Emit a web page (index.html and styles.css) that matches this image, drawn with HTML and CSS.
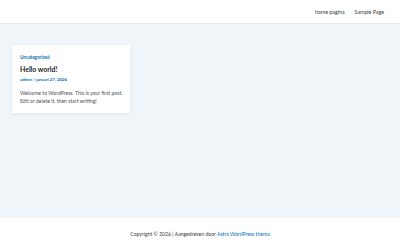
FILE: index.html
```html
<!DOCTYPE html>
<html lang="nl">
<head>
  <meta charset="UTF-8">
  <meta name="viewport" content="width=device-width, initial-scale=1.0">
  <title>Hello world!</title>
  <link rel="stylesheet" href="styles.css">
</head>
<body>
  <header class="site-header">
    <nav class="main-nav">
      <a href="#">home pagina</a>
      <a href="#">Sample Page</a>
    </nav>
  </header>

  <main class="site-content">
    <article class="post-card">
      <a class="post-cat" href="#">Uncategorized</a>
      <h2 class="post-title">Hello world!</h2>
      <div class="post-meta"><a href="#">admin</a> / <a href="#">januari 27, 2026</a></div>
      <p class="post-excerpt">Welcome to WordPress. This is your first post. Edit or delete it, then start writing!</p>
    </article>
  </main>

  <footer class="site-footer">
    <p>Copyright &copy; 2026 | Aangedreven door <a href="#">Astra WordPress thema</a></p>
  </footer>
</body>
</html>
```

FILE: styles.css
```css
body {
    font-family: Lato, "Noto Sans", sans-serif;
    background-color: #ffffff;
    color: #4b4f58;
    margin: 0;
    padding: 0;
    display: flex;
    flex-direction: column;
    height: 250px;
    overflow: hidden;
}

a {
    text-decoration: none;
    color: #0170b9;
}

.site-header {
    height: 23px;
    background-color: #ffffff;
    border-bottom: 1px solid #e6e9ee;
    display: flex;
    align-items: center;
    justify-content: flex-end;
    padding-right: 16px;
}

.main-nav {
    display: flex;
    gap: 10px;
}

.main-nav a {
    color: #3a3a3a;
    font-size: 5.3px;
}

.site-content {
    flex: 1;
    background-color: #f0f5fa;
    padding: 21px 12px 0;
}

.post-card {
    width: 118px;
    box-sizing: border-box;
    background-color: #ffffff;
    padding: 9px 4px 8px 8px;
    box-shadow: 0 1px 4px rgba(0, 0, 0, 0.06);
}

.post-cat {
    display: block;
    font-size: 4.6px;
    font-weight: 700;
    line-height: 6px;
}

.post-title {
    font-size: 6.9px;
    color: #222222;
    font-weight: 700;
    margin: 4px 0 3px;
    line-height: 10px;
}

.post-meta {
    font-size: 4.3px;
    font-weight: 700;
    color: #0170b9;
    line-height: 6px;
}

.post-excerpt {
    font-size: 5.1px;
    line-height: 8px;
    margin: 6px 0 0;
    color: #4b4f58;
}

.site-footer {
    height: 32px;
    display: flex;
    align-items: center;
    justify-content: center;
    font-size: 5.1px;
    color: #3a3a3a;
    background-color: #ffffff;
}

.site-footer p {
    margin: 0;
}
```
